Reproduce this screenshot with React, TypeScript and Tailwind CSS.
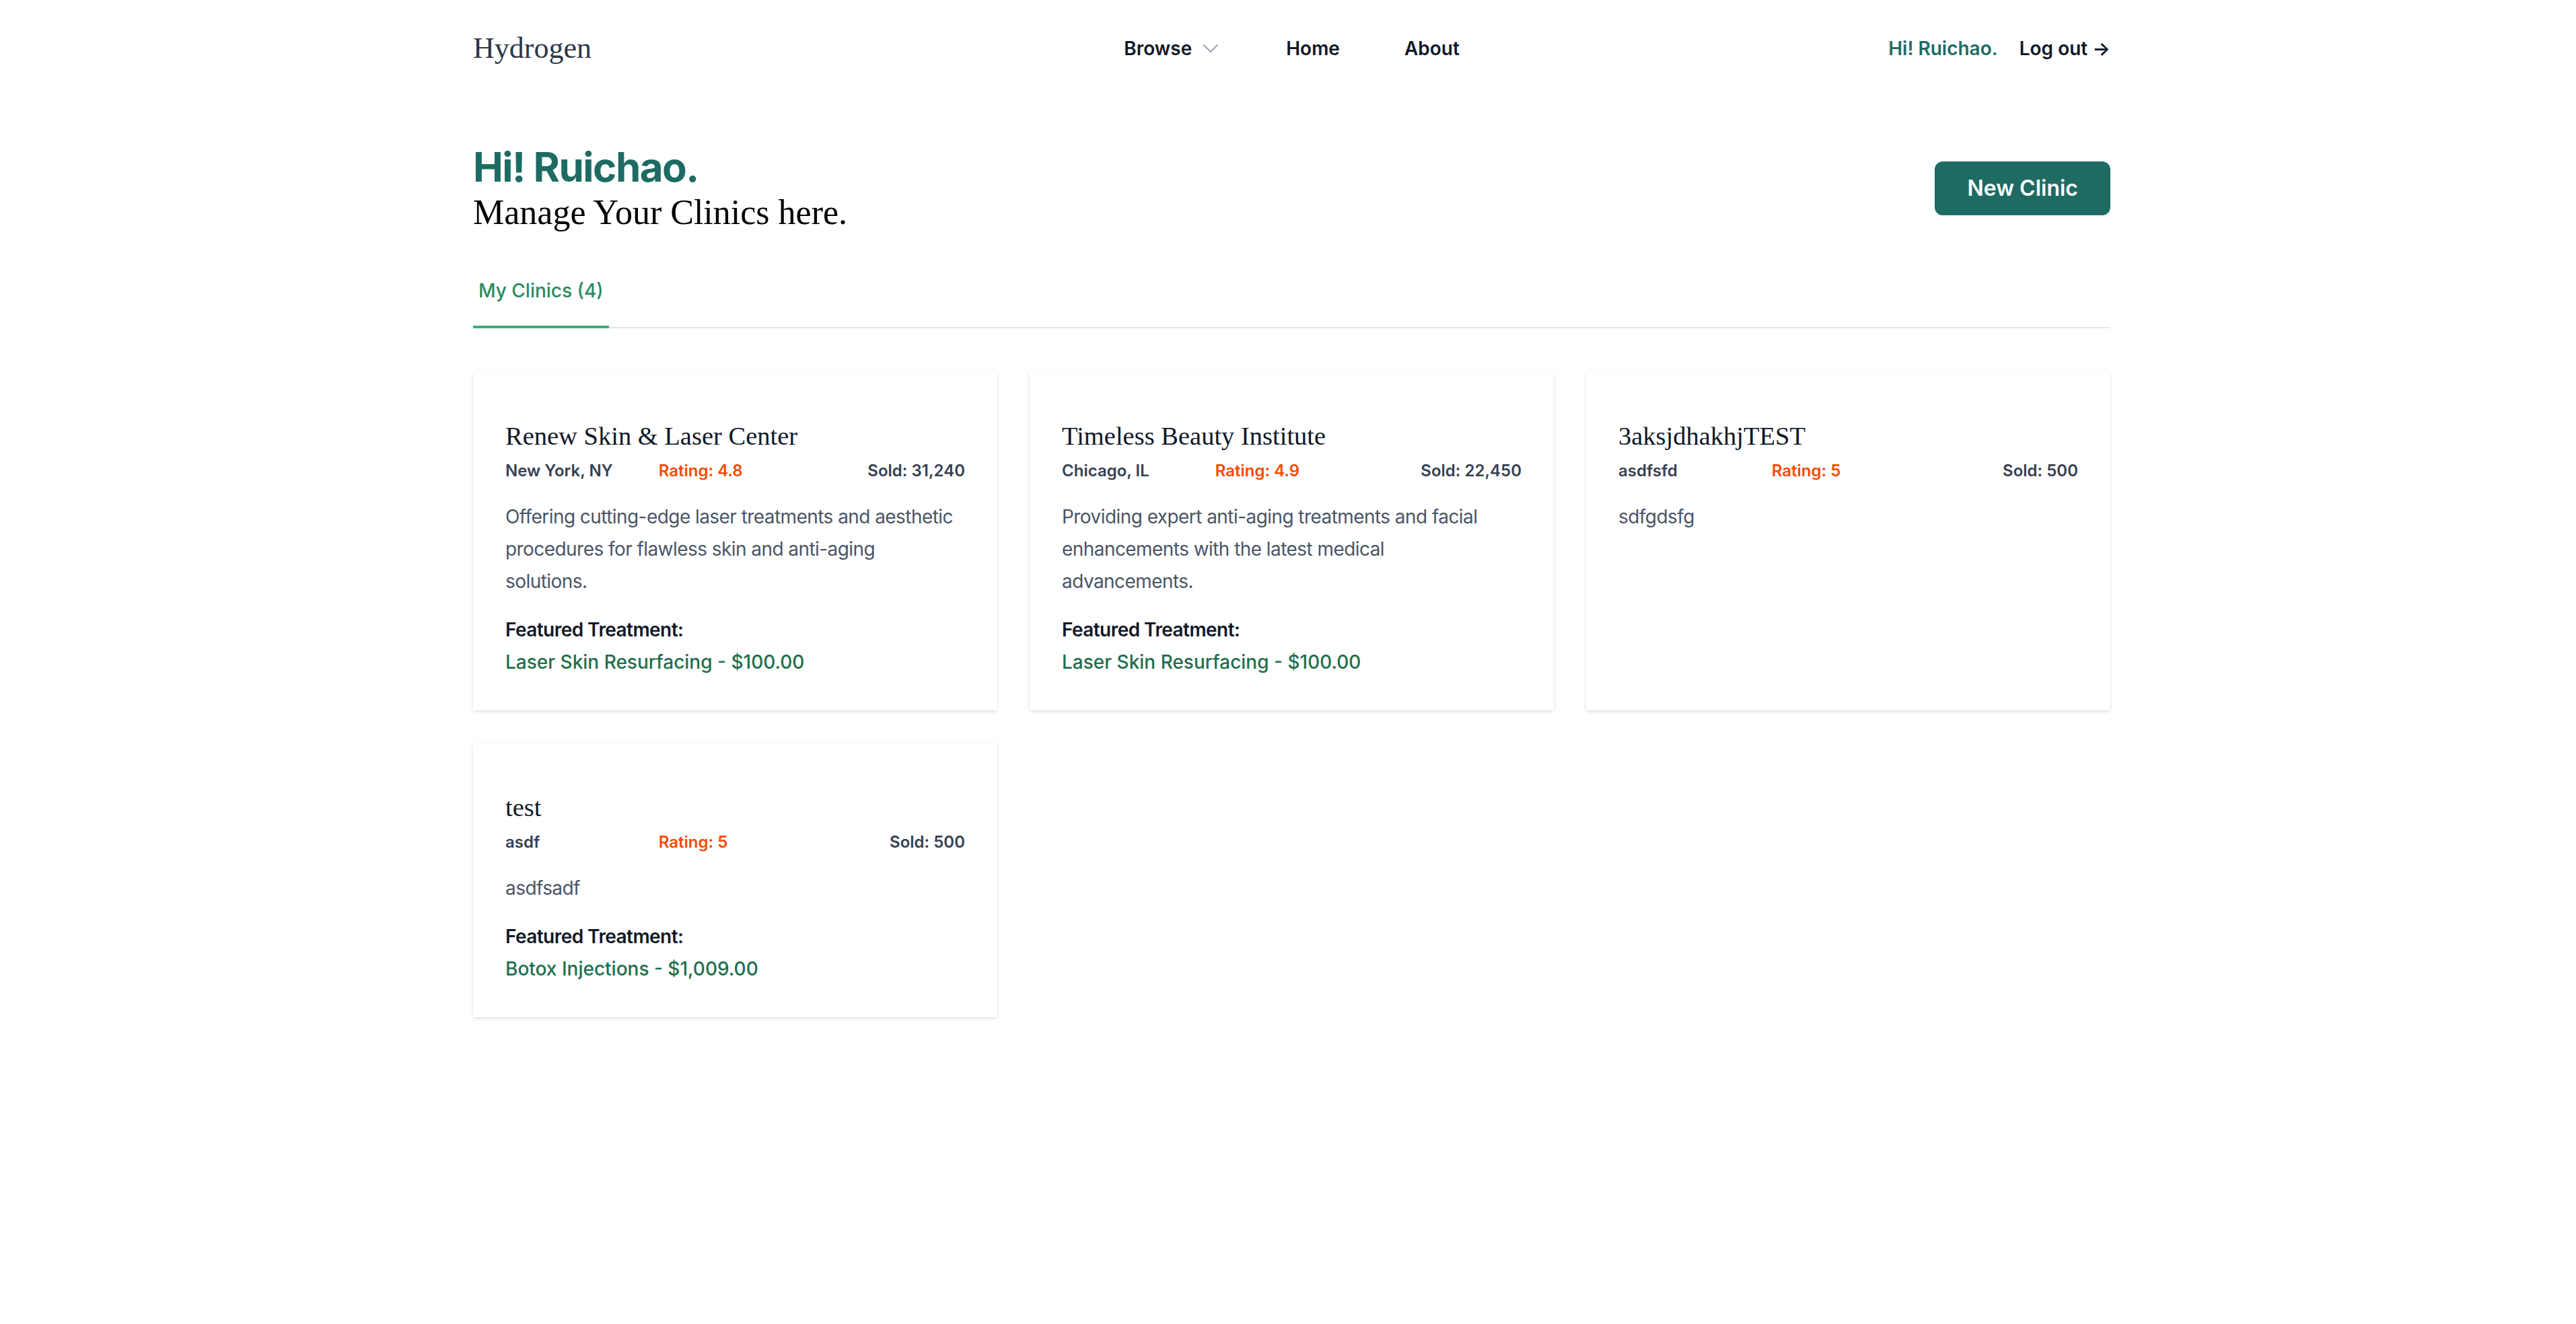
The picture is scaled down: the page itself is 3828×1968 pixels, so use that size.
import React from "react";

type Clinic = {
  name: string;
  location: string;
  rating: string;
  sold: string;
  description: string;
  featured?: string;
};

const clinics: Clinic[] = [
  {
    name: "Renew Skin & Laser Center",
    location: "New York, NY",
    rating: "4.8",
    sold: "31,240",
    description:
      "Offering cutting-edge laser treatments and aesthetic procedures for flawless skin and anti-aging solutions.",
    featured: "Laser Skin Resurfacing - $100.00",
  },
  {
    name: "Timeless Beauty Institute",
    location: "Chicago, IL",
    rating: "4.9",
    sold: "22,450",
    description:
      "Providing expert anti-aging treatments and facial enhancements with the latest medical advancements.",
    featured: "Laser Skin Resurfacing - $100.00",
  },
  {
    name: "3aksjdhakhjTEST",
    location: "asdfsfd",
    rating: "5",
    sold: "500",
    description: "sdfgdsfg",
  },
  {
    name: "test",
    location: "asdf",
    rating: "5",
    sold: "500",
    description: "asdfsadf",
    featured: "Botox Injections - $1,009.00",
  },
];

function ClinicCard({ clinic }: { clinic: Clinic }) {
  return (
    <div className="bg-white px-[48px] pt-[68px] pb-[48px] shadow-[0_2px_6px_0_rgba(0,0,0,0.1),0_2px_4px_-2px_rgba(0,0,0,0.1)]">
      <h3 className="font-['Liberation_Serif',serif] text-[38.5px] leading-[56px] text-gray-900">
        {clinic.name}
      </h3>
      <div className="mt-[8px] grid grid-cols-3 text-[24px] leading-[32px] font-semibold">
        <span className="text-gray-700">{clinic.location}</span>
        <span className="text-orange-600">Rating: {clinic.rating}</span>
        <span className="text-right text-gray-700">Sold: {clinic.sold}</span>
      </div>
      <p className="mt-[28px] max-w-[668px] text-[28px] leading-[48px] tracking-[-0.02em] text-gray-600">
        {clinic.description}
      </p>
      {clinic.featured && (
        <div className="mt-[24px] text-[28px] leading-[48px]">
          <p className="font-semibold tracking-[-0.02em] text-gray-900">Featured Treatment:</p>
          <p className="font-medium text-[#1e6f4c]">{clinic.featured}</p>
        </div>
      )}
    </div>
  );
}

export default function App() {
  return (
    <div className="min-h-screen bg-white font-['Inter',sans-serif]">
      <header className="pl-[703px] pr-[692px]">
        <nav className="flex items-center justify-between pt-[44px]">
          <div className="flex flex-1">
            <a href="#" className="font-['Liberation_Serif',serif] text-[44px] leading-[56px] text-[#2d3748]">
              Hydrogen
            </a>
          </div>
          <div className="flex gap-x-[96px] text-[28px] leading-[40px] font-semibold text-gray-900">
            <button className="flex items-center">
              Browse
              <svg
                className="ml-[12px] h-[32px] w-[32px] text-gray-400"
                viewBox="0 0 24 24"
                fill="none"
                stroke="currentColor"
                strokeWidth={1.5}
              >
                <path strokeLinecap="round" strokeLinejoin="round" d="m19.5 8.25-7.5 7.5-7.5-7.5" />
              </svg>
            </button>
            <a href="#">Home</a>
            <a href="#">About</a>
          </div>
          <div className="flex flex-1 items-center justify-end gap-x-[32px] text-[28px] leading-[40px] font-semibold">
            <span className="text-[#1e6b64]">Hi! Ruichao.</span>
            <a href="#" className="text-gray-900">
              Log out <span aria-hidden="true">&rarr;</span>
            </a>
          </div>
        </nav>
      </header>

      <main className="pl-[703px] pr-[692px] pt-[112px] pb-[96px]">
        <div className="flex items-center justify-between">
          <div>
            <h1 className="text-[60px] leading-[72px] font-bold tracking-tight text-[#1e6b64]">Hi! Ruichao.</h1>
            <h2 className="font-['Liberation_Serif',serif] text-[52px] leading-[64px] text-black">
              Manage Your Clinics here.
            </h2>
          </div>
          <button className="rounded-[12px] bg-[#1e6b64] px-[48px] py-[16px] text-[32px] leading-[48px] font-semibold text-white">
            New Clinic
          </button>
        </div>

        <div className="mt-[32px] border-b-2 border-gray-200">
          <nav className="-mb-[2px] flex">
            <a
              href="#"
              className="border-b-[4px] border-[#34b37a] px-[8px] py-[32px] text-[28px] leading-[40px] font-medium text-[#2a8a5f]"
            >
              My Clinics (4)
            </a>
          </nav>
        </div>

        <div className="mt-[64px] grid grid-cols-3 gap-[48px]">
          {clinics.map((c) => (
            <ClinicCard key={c.name} clinic={c} />
          ))}
        </div>
      </main>
    </div>
  );
}
